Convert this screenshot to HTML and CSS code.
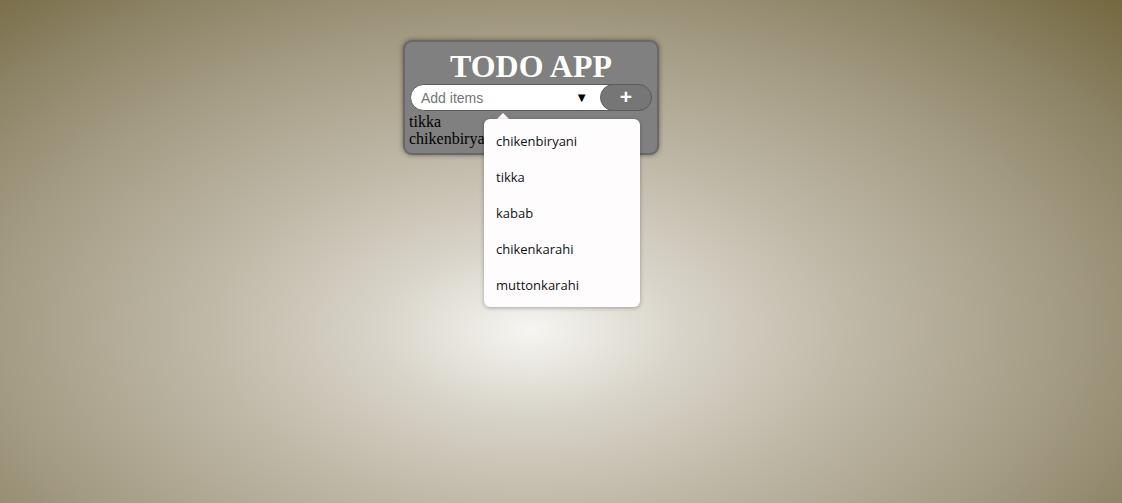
FILE: index.html
```html
<!DOCTYPE html>
<html>
<head>
<meta charset="utf-8">
<link rel="stylesheet" href="styles.css">
</head>
<body>
<div class="page">
  <div class="card">
    <h1 class="title">TODO APP</h1>
    <div class="entry">
      <div class="field">
        <span class="placeholder">Add items</span>
        <span class="caret">&#9660;</span>
      </div>
      <button class="add">+</button>
    </div>
    <ul class="items">
      <li>tikka</li>
      <li>chikenbiryani</li>
    </ul>
    <div class="popup">
      <div class="notch"></div>
      <ul class="options">
        <li>chikenbiryani</li>
        <li>tikka</li>
        <li>kabab</li>
        <li>chikenkarahi</li>
        <li>muttonkarahi</li>
      </ul>
    </div>
  </div>
</div>
</body>
</html>
```

FILE: styles.css
```css
html, body {
  margin: 0;
  height: 100%;
}
body {
  background: radial-gradient(ellipse farthest-corner at 530px 330px, #f6f5f1 0%, #d8d4c9 18%, #c0b9a8 38%, #a49c84 63%, #8c8265 82%, #74683f 100%);
  font-family: "Liberation Serif", serif;
}
.page {
  padding: 40px 0 0 403px;
}
.card {
  position: relative;
  width: 242px;
  padding: 0 5px 6px 5px;
  background: #808080;
  border: 2px solid #686868;
  border-radius: 9px;
  box-shadow: 0 0 5px rgba(40, 35, 20, 0.55);
}
.title {
  margin: 0;
  padding-top: 6px;
  height: 36px;
  line-height: 36px;
  text-align: center;
  color: #ffffff;
  font-size: 32px;
  font-weight: bold;
  text-shadow: 1px 0 0 rgba(120, 110, 80, 0.5);
}
.entry {
  display: flex;
  align-items: stretch;
  height: 25px;
  background: #ffffff;
  border: 1px solid #5c5c5c;
  border-radius: 14px;
}
.field {
  flex: 1;
  display: flex;
  align-items: center;
  justify-content: space-between;
  padding: 0 8px 0 10px;
  font-family: "Liberation Sans", sans-serif;
}
.placeholder {
  color: #757575;
  font-size: 14px;
}
.caret {
  color: #000;
  font-size: 13px;
  margin-right: 4px;
}
.add {
  width: 52px;
  margin: -1px -1px -1px 0;
  padding: 0 0 1px 0;
  background: #767676;
  border: 1px solid #5c5c5c;
  border-radius: 14px;
  color: #ffffff;
  font-family: "Liberation Sans", sans-serif;
  font-size: 21px;
  font-weight: bold;
  line-height: 20px;
}
.items {
  list-style: none;
  margin: 2px 0 0 -1px;
  padding: 0;
  font-size: 16px;
  line-height: 17px;
  color: #000;
}
.popup {
  position: absolute;
  left: 79px;
  top: 71px;
  width: 156px;
}
.notch {
  margin-left: 13px;
  width: 0;
  height: 0;
  border-left: 6px solid transparent;
  border-right: 6px solid transparent;
  border-bottom: 6px solid #fffcfe;
}
.options {
  list-style: none;
  margin: 0;
  padding: 4px 0;
  background: #fffcfe;
  border-radius: 6px;
  box-shadow: 0 1px 4px rgba(0, 0, 0, 0.3);
  font-family: "Open Sans", sans-serif;
  font-size: 13px;
  font-weight: 500;
  color: #111111;
}
.options li {
  height: 36px;
  line-height: 36px;
  padding-left: 12px;
}
```
